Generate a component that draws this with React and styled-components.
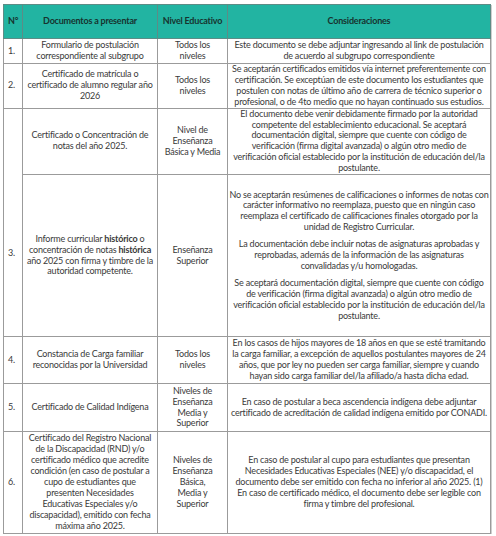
import styled, { createGlobalStyle } from "styled-components";

const GlobalStyle = createGlobalStyle`
  body {
    margin: 0;
    background: #ffffff;
    font-family: Lato, "Open Sans", sans-serif;
  }
`;

const Page = styled.div`
  padding: 4px 0 0 3px;
`;

const Table = styled.table`
  border-collapse: collapse;
  table-layout: fixed;
  width: 487px;
  font-size: 9px;
  line-height: 10.9px;
  letter-spacing: -0.2px;
  color: #3a3a3a;
  box-shadow: 1px 1px 0 #cfcfcf;
`;

const HeadCell = styled.th`
  background: #22b4a2;
  color: #17332f;
  font-weight: 700;
  height: 33px;
  padding: 0;
  border: 1px solid #5d8c86;
  text-align: ${(p) => (p.$left ? "left" : "center")};
  padding-left: ${(p) => (p.$left ? "4px" : "0")};
`;

const Row = styled.tr`
  height: ${(p) => p.$h}px;
`;

const Cell = styled.td`
  border: 1px solid #9b9b9b;
  text-align: center;
  vertical-align: ${(p) => (p.$top ? "top" : "middle")};
  padding: ${(p) => (p.$pad ? `${p.$pad}px 0 0 4px` : "0 1px")};
  white-space: nowrap;
`;

const NumCell = styled(Cell)`
  text-align: left;
  padding-left: 4px;
`;

const Para = styled.div`
  & + & {
    margin-top: 6px;
  }
`;

const lines = (arr) =>
  arr.map((l, i) => (
    <span key={i}>
      {l}
      {i < arr.length - 1 && <br />}
    </span>
  ));

const rows = [
  {
    n: "1.",
    h: 25,
    doc: ["Formulario de postulación", "correspondiente al subgrupo"],
    lvl: ["Todos los", "niveles"],
    cons: [["Este documento se debe adjuntar ingresando al link de postulación", "de acuerdo al subgrupo correspondiente"]],
  },
  {
    n: "2.",
    h: 44,
    doc: ["Certificado de matrícula o", "certificado de alumno regular año", "2026"],
    lvl: ["Todos los", "niveles"],
    cons: [[
      "Se aceptarán certificados emitidos vía internet preferentemente con",
      "certificación. Se exceptúan de este documento los estudiantes que",
      "postulen con notas de último año de carrera de técnico superior o",
      "profesional, o de 4to medio que no hayan continuado sus estudios.",
    ]],
  },
];

const rowsAfter = [
  {
    n: "4.",
    h: 47,
    doc: ["Constancia de Carga familiar", "reconocidas por la Universidad"],
    lvl: ["Todos los", "niveles"],
    cons: [[
      "En los casos de hijos mayores de 18 años en que se esté tramitando",
      "la carga familiar, a excepción de aquellos postulantes mayores de 24",
      "años, que por ley no pueden ser carga familiar, siempre y cuando",
      "hayan sido carga familiar del/la afiliado/a hasta dicha edad.",
    ]],
  },
  {
    n: "5.",
    h: 48,
    doc: ["Certificado de Calidad Indígena"],
    lvl: ["Niveles de", "Enseñanza", "Media y", "Superior"],
    cons: [[
      "En caso de postular a beca ascendencia indígena debe adjuntar",
      "certificado de acreditación de calidad indígena emitido por CONADI.",
    ]],
  },
  {
    n: "6.",
    h: 102,
    doc: [
      "Certificado del Registro Nacional",
      "de la Discapacidad (RND) y/o",
      "certificado médico que acredite",
      "condición (en caso de postular a",
      "cupo de estudiantes que",
      "presenten Necesidades",
      "Educativas Especiales y/o",
      "discapacidad), emitido con fecha",
      "máxima año 2025.",
    ],
    lvl: ["Niveles de", "Enseñanza", "Básica,", "Media y", "Superior"],
    cons: [[
      "En caso de postular al cupo para estudiantes que presentan",
      "Necesidades Educativas Especiales (NEE) y/o discapacidad, el",
      "documento debe ser emitido con fecha no inferior al año 2025. (1)",
      "En caso de certificado médico, el documento debe ser legible con",
      "firma y timbre del profesional.",
    ]],
  },
];

const SimpleRow = ({ r }) => (
  <Row $h={r.h}>
    <NumCell>{r.n}</NumCell>
    <Cell>{lines(r.doc)}</Cell>
    <Cell>{lines(r.lvl)}</Cell>
    <Cell>
      {r.cons.map((p, i) => (
        <Para key={i}>{lines(p)}</Para>
      ))}
    </Cell>
  </Row>
);

export default function App() {
  return (
    <Page>
      <GlobalStyle />
      <Table>
        <colgroup>
          <col style={{ width: 19 }} />
          <col style={{ width: 135 }} />
          <col style={{ width: 70 }} />
          <col style={{ width: 263 }} />
        </colgroup>
        <thead>
          <tr>
            <HeadCell $left>N°</HeadCell>
            <HeadCell>Documentos a presentar</HeadCell>
            <HeadCell>Nivel Educativo</HeadCell>
            <HeadCell>Consideraciones</HeadCell>
          </tr>
        </thead>
        <tbody>
          {rows.map((r) => (
            <SimpleRow key={r.n} r={r} />
          ))}
          <Row $h={65}>
            <NumCell rowSpan={2} $top $pad={139}>
              3.
            </NumCell>
            <Cell>{lines(["Certificado o Concentración de", "notas del año 2025."])}</Cell>
            <Cell>{lines(["Nivel de", "Enseñanza", "Básica y Media"])}</Cell>
            <Cell>
              {lines([
                "El documento debe venir debidamente firmado por la autoridad",
                "competente del establecimiento educacional. Se aceptará",
                "documentación digital, siempre que cuente con código de",
                "verificación (firma digital avanzada) o algún otro medio de",
                "verificación oficial establecido por la institución de educación del/la",
                "postulante.",
              ])}
            </Cell>
          </Row>
          <Row $h={162}>
            <Cell>
              Informe curricular <b>histórico</b> o
              <br />
              concentración de notas <b>histórica</b>
              <br />
              año 2025 con firma y timbre de la
              <br />
              autoridad competente.
            </Cell>
            <Cell>{lines(["Enseñanza", "Superior"])}</Cell>
            <Cell>
              <Para>
                {lines([
                  "No se aceptarán resúmenes de calificaciones o informes de notas con",
                  "carácter informativo no reemplaza, puesto que en ningún caso",
                  "reemplaza el certificado de calificaciones finales otorgado por la",
                  "unidad de Registro Curricular.",
                ])}
              </Para>
              <Para>
                {lines([
                  "La documentación debe incluir notas de asignaturas aprobadas y",
                  "reprobadas, además de la información de las asignaturas",
                  "convalidadas y/u homologadas.",
                ])}
              </Para>
              <Para>
                {lines([
                  "Se aceptará documentación digital, siempre que cuente con código",
                  "de verificación (firma digital avanzada) o algún otro medio de",
                  "verificación oficial establecido por la institución de educación del/la",
                  "postulante.",
                ])}
              </Para>
            </Cell>
          </Row>
          {rowsAfter.map((r) => (
            <SimpleRow key={r.n} r={r} />
          ))}
        </tbody>
      </Table>
    </Page>
  );
}
